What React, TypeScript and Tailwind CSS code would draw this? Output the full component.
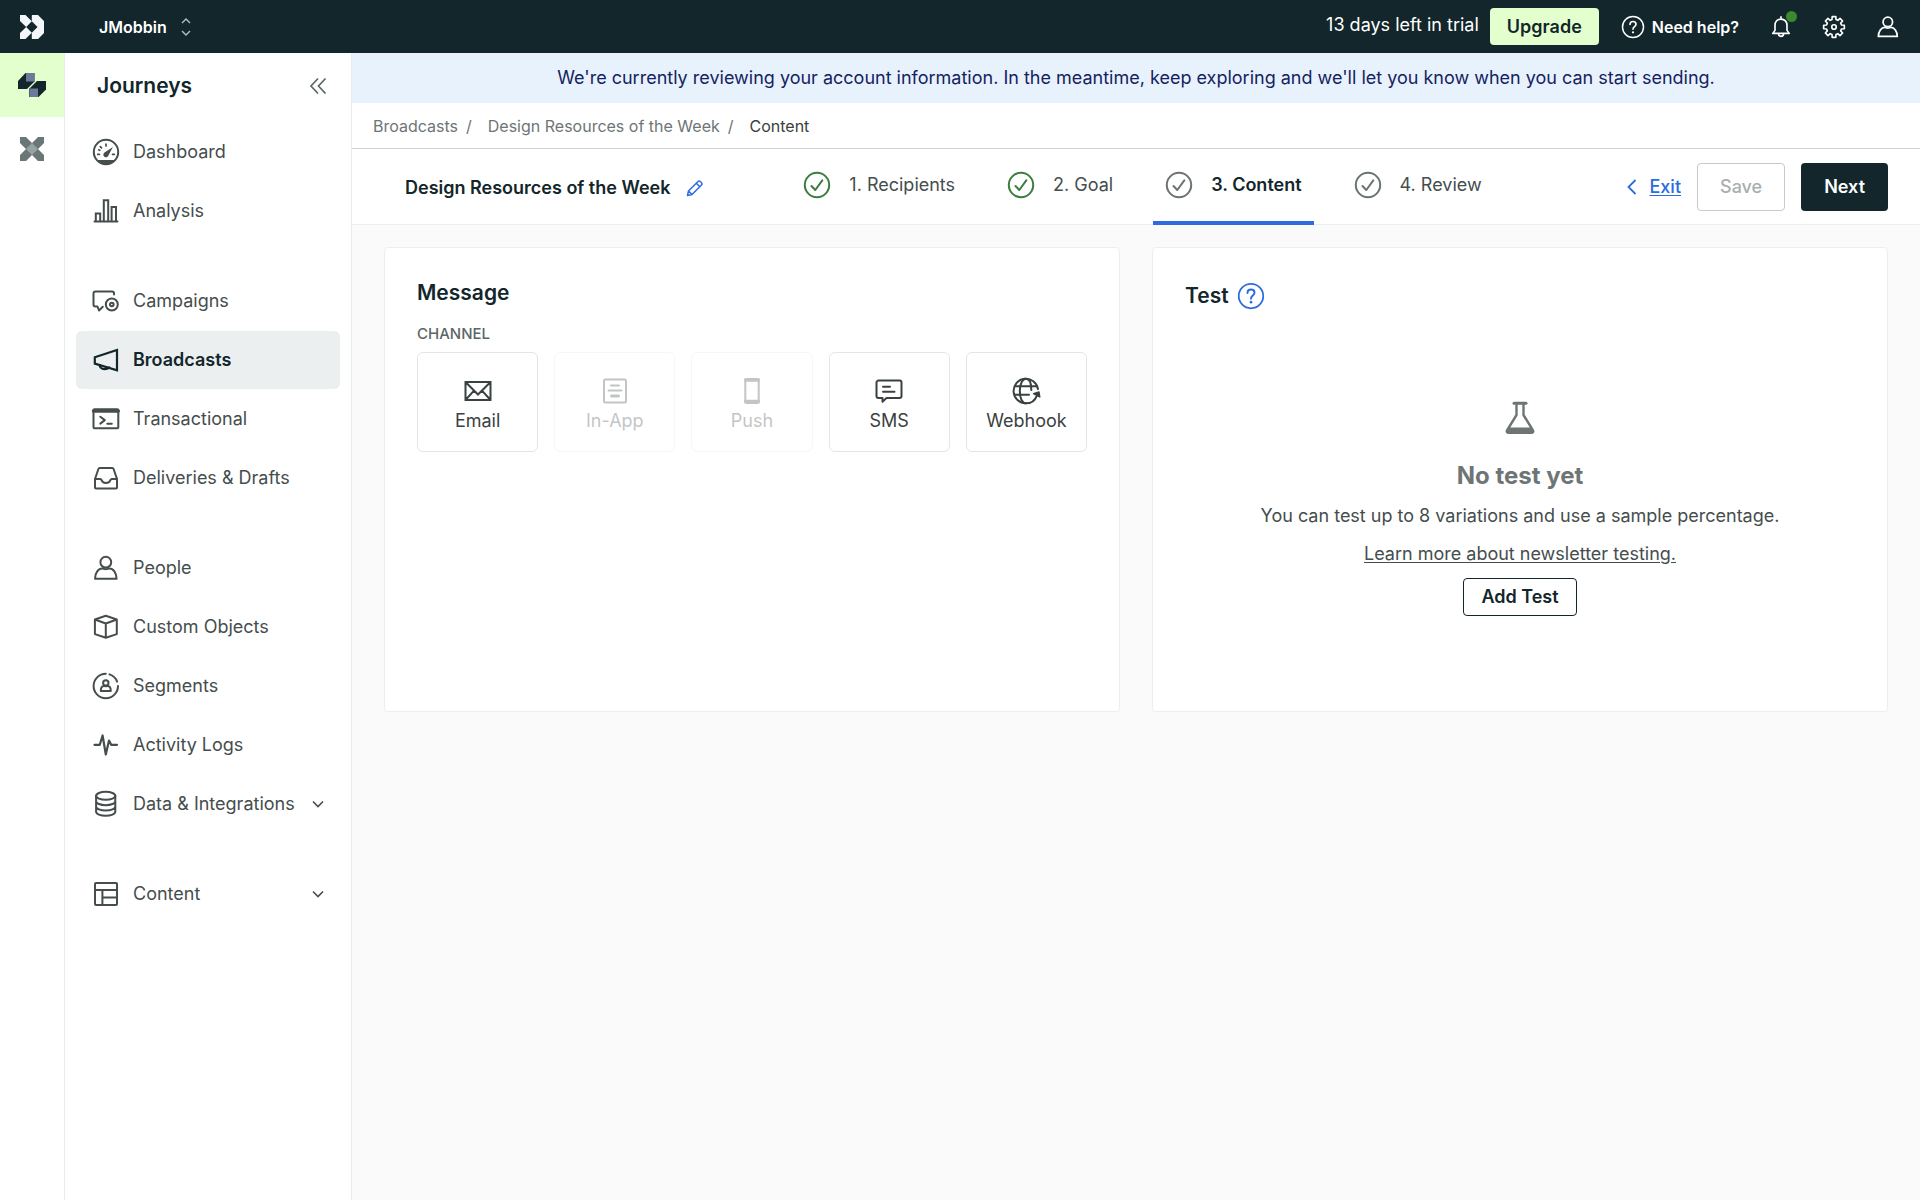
import React from 'react';

type IconProps = { className?: string };

const Icon: React.FC<{ className?: string; children: React.ReactNode }> = ({ className = 'size-8', children }) => (
  <svg
    viewBox="0 0 32 32"
    className={`${className} shrink-0`}
    fill="none"
    stroke="currentColor"
    strokeWidth="2"
    strokeLinejoin="round"
    strokeLinecap="round"
    aria-hidden="true"
  >
    {children}
  </svg>
);

const DashboardIcon = () => (
  <Icon>
    <circle cx="16" cy="16" r="12.2" />
    <path d="M7 24h18c-2 2.600-5.300 4.200-9 4.200s-7-1.600-9-4.200z" fill="currentColor" stroke="none" />
    <path d="M22.900 11l-4.500 8.500a2.600 2.600 0 1 1-3.900-3z" fill="currentColor" stroke="none" />
    <path d="M16 8.200v1.800M10.300 10.600l1.200 1.200M7.700 18.300h1.800M22.500 18.300h1.800M8.700 13.800l1 .5" strokeWidth="1.700" />
  </Icon>
);

const AnalysisIcon = () => (
  <Icon>
    <path d="M4.500 26.500h23M5.800 26v-7.500h4.400V26M13.800 26V5.200h4.400V26M21.600 26V12h4.400v14" strokeLinejoin="miter" />
  </Icon>
);

const CampaignsIcon = () => (
  <Icon>
    <path d="M24 9.500V8.500a2 2 0 0 0-2-2H5.500a2 2 0 0 0-2 2V19.500a2 2 0 0 0 2 2H7.500L9 25.500L12.800 21.800" />
    <circle cx="21.800" cy="19.500" r="6" />
    <circle cx="21.800" cy="19.500" r="1.800" />
  </Icon>
);

const BroadcastsIcon = () => (
  <Icon>
    <path d="M4.800 13.200L27 6v20.300L4.800 19.600z" strokeLinejoin="miter" strokeWidth="2.200" />
    <path d="M9.500 21.200c.8 2.600 3 4 5.300 4 1.800 0 3.400-.6 4.400-1.800" strokeWidth="2.200" />
  </Icon>
);

const TransactionalIcon = () => (
  <Icon>
    <rect x="3.500" y="6.300" width="24.800" height="19" rx="1" />
    <path d="M3.500 8h24.800" strokeWidth="3.500" />
    <path d="M10.300 13.700l4.500 3.400-4.500 3.500M17.300 20.700h4.500" />
  </Icon>
);

const DeliveriesIcon = () => (
  <Icon>
    <path d="M5 17v8.500a1 1 0 0 0 1 1h20a1 1 0 0 0 1-1V17L23.600 7a1.500 1.500 0 0 0-1.400-1H9.800a1.500 1.500 0 0 0-1.400 1z" />
    <path d="M5 17h5.200c.8 0 1.100.5 1.500 1.300.7 1.700 2 2.700 4.300 2.700s3.600-1 4.300-2.700c.4-.8.700-1.300 1.500-1.300H27" />
  </Icon>
);

const PersonIcon = ({ className }: IconProps) => (
  <Icon className={className}>
    <circle cx="15.800" cy="10.200" r="5.400" />
    <path d="M5 26.800c0-6 3.500-10.300 7.200-10.300 1.300 0 2.200.7 3.600.7s2.300-.7 3.600-.7c3.700 0 7.200 4.300 7.200 10.300z" />
  </Icon>
);

const ObjectsIcon = () => (
  <Icon>
    <path d="M15.800 4.800L26.800 8.500v14.600L15.800 26.800 4.900 23.100V8.500zM4.900 8.500l10.900 4 11-4M15.800 12.500v14.300" />
  </Icon>
);

const SegmentsIcon = () => (
  <Icon>
    <path d="M15.800 3.800a12.200 12.200 0 1 0 12.200 12.200M19.500 4.400a12.200 12.200 0 0 1 7.600 7.200" />
    <circle cx="15.800" cy="12.900" r="2.700" />
    <path d="M10.800 21c0-3 1.400-5 3.200-5 .7 0 1.100.3 1.800.3s1.100-.3 1.800-.3c1.800 0 3.200 2 3.200 5z" />
  </Icon>
);

const ActivityIcon = () => (
  <Icon>
    <path d="M4.500 15.800h5.300L12.600 6.500l3.200 19L19 11.500l2.200 4.300H27" strokeWidth="2.200" />
  </Icon>
);

const DataIcon = () => (
  <Icon>
    <ellipse cx="15.700" cy="7.800" rx="9.600" ry="4" />
    <path d="M6.100 7.800v16c0 2.200 4.300 4 9.600 4s9.600-1.800 9.600-4v-16M6.100 13.200c0 2.200 4.300 4 9.600 4s9.600-1.800 9.600-4M6.100 18.600c0 2.200 4.300 4 9.600 4s9.600-1.800 9.600-4" />
  </Icon>
);

const ContentIcon = () => (
  <Icon>
    <rect x="5" y="5" width="22" height="22" rx="1" />
    <path d="M5 12h22M12.400 12v15M12.400 19.500H27" />
  </Icon>
);

const ChevronDown = () => (
  <svg viewBox="0 0 12 8" className="w-3 h-2 shrink-0" fill="none" stroke="currentColor" strokeWidth="1.600" aria-hidden="true">
    <path d="M1 1.500l5 5 5-5" />
  </svg>
);

const HelpIcon = ({ className }: IconProps) => (
  <Icon className={className}>
    <circle cx="16" cy="16" r="14" />
    <path d="M12 12.600c0-2.500 1.700-4 4-4s4 1.500 4 3.700c0 3.200-4 3.300-4 6.700" strokeWidth="2.200" />
    <circle cx="16" cy="23" r="1.500" fill="currentColor" stroke="none" />
  </Icon>
);

const CheckCircle = ({ className }: IconProps) => (
  <svg viewBox="0 0 28 28" className={`size-7 shrink-0 ${className}`} fill="none" stroke="currentColor" strokeWidth="2" aria-hidden="true">
    <circle cx="14" cy="14" r="12.200" />
    <path d="M8.500 15l3.800 4 7-9.700" strokeLinecap="round" strokeLinejoin="round" />
  </svg>
);

const EmailIcon = () => (
  <Icon>
    <path d="M3.500 7h25v18h-25zM3.500 7L16 19.500 28.500 7M3.500 25l8.500-9.300M28.500 25L20 15.700" strokeLinejoin="miter" />
  </Icon>
);

const InAppIcon = () => (
  <Icon>
    <rect x="5" y="4.500" width="22" height="23" rx="1.500" />
    <path d="M12 10.500h8M9.500 15.500h13" />
    <path d="M12.500 21h7" strokeWidth="3" />
  </Icon>
);

const PushIcon = () => (
  <Icon>
    <rect x="9.300" y="4" width="13.400" height="24" rx="1.500" />
    <path d="M9.500 5h13M9.500 26.500h13" strokeWidth="3.500" />
  </Icon>
);

const SmsIcon = () => (
  <Icon>
    <path d="M5.500 5.500h21a2 2 0 0 1 2 2v13.500a2 2 0 0 1-2 2H13.500l-4 3.700V23h-4a2 2 0 0 1-2-2V7.500a2 2 0 0 1 2-2z" />
    <path d="M10 11.700h7M10 16.700h11.500" />
  </Icon>
);

const WebhookIcon = () => (
  <Icon>
    <path d="M28 14A12.300 12.300 0 1 0 16 28.300c5 0 9-2.800 10.800-7.500" />
    <path d="M21.300 15c0-7-2-11.200-5.300-11.200S9.800 8.500 9.800 16s2.500 12.300 6.200 12.300M5 11.200h22M5 19.700h14" />
    <path d="M23.500 18.700l5.500-1.700.8 5z" fill="currentColor" strokeWidth="1.400" />
  </Icon>
);

const FlaskIcon = () => (
  <svg viewBox="0 0 32 36" className="w-8 h-9" fill="none" stroke="currentColor" strokeWidth="2.400" strokeLinejoin="round" aria-hidden="true">
    <path d="M12.500 3v12L3 30.500c-.6 1.200 0 2.200 1 2.200h24c1 0 1.600-1 1-2.200L19.500 15V3" />
    <path d="M10 3.200h12" strokeWidth="3" strokeLinecap="round" />
    <path d="M4.800 27.500h22.400l1.800 5H3z" fill="currentColor" stroke="none" />
  </svg>
);

const navGroups = [
  [
    { label: 'Dashboard', icon: DashboardIcon },
    { label: 'Analysis', icon: AnalysisIcon }
  ],
  [
    { label: 'Campaigns', icon: CampaignsIcon },
    { label: 'Broadcasts', icon: BroadcastsIcon, active: true },
    { label: 'Transactional', icon: TransactionalIcon },
    { label: 'Deliveries & Drafts', icon: DeliveriesIcon }
  ],
  [
    { label: 'People', icon: PersonIcon },
    { label: 'Custom Objects', icon: ObjectsIcon },
    { label: 'Segments', icon: SegmentsIcon },
    { label: 'Activity Logs', icon: ActivityIcon },
    { label: 'Data & Integrations', icon: DataIcon, expandable: true }
  ],
  [{ label: 'Content', icon: ContentIcon, expandable: true }]
] as { label: string; icon: React.FC; active?: boolean; expandable?: boolean }[][];

const steps = [
  { label: '1. Recipients', done: true },
  { label: '2. Goal', done: true },
  { label: '3. Content', done: false, current: true },
  { label: '4. Review', done: false }
];

const channels = [
  { label: 'Email', icon: EmailIcon },
  { label: 'In-App', icon: InAppIcon, disabled: true },
  { label: 'Push', icon: PushIcon, disabled: true },
  { label: 'SMS', icon: SmsIcon },
  { label: 'Webhook', icon: WebhookIcon }
];

const TopBar = () => (
  <header className="flex items-center h-[53px] bg-[#12262b] text-white shrink-0">
    <a href="#" aria-label="Home" className="flex justify-center w-16">
      <svg viewBox="0 0 24 24" className="size-6" fill="#f3f6fb" aria-hidden="true">
        <path d="M0 0h5.500l6.300 6.300-5.600 5.700L0 5.900zM12.200 0H18l6 6v12l-6 6h-5.800l-.4-.4v-5.900L17.500 12l-5.700-5.700V.4zM0 18.100L6.200 12l5.600 5.700L5.500 24H0z" />
      </svg>
    </a>
    <button className="flex items-center gap-[14px] ml-[35px] text-base font-semibold">
      JMobbin
      <svg viewBox="0 0 10 18" className="w-[10px] h-[18px] opacity-70" fill="none" stroke="currentColor" strokeWidth="1.400" aria-hidden="true">
        <path d="M1 5l4-4 4 4M1 13l4 4 4-4" />
      </svg>
    </button>
    <div className="flex items-center ml-auto">
      <span className="text-lg leading-6 pb-1">13 days left in trial</span>
      <button className="ml-[11px] h-[37px] px-[17px] rounded bg-[#e4ffce] text-[#12262b] text-lg font-semibold">Upgrade</button>
      <button className="flex items-center gap-[7px] ml-[22px] text-base font-semibold">
        <HelpIcon className="size-6" />
        Need help?
      </button>
      <button aria-label="Notifications" className="relative ml-[30px]">
        <Icon className="size-6">
          <path d="M5 24.500h22l-3-4V14c0-5-3-8.500-8-8.500S8 9 8 14v6.500zM16 5.500V2.500M12.500 25c0 2 1.500 3.500 3.500 3.500s3.500-1.500 3.500-3.500" strokeWidth="2.200" />
        </Icon>
        <span className="absolute -top-1 -right-1 size-[11px] rounded-full bg-[#3c8a2e]" />
      </button>
      <button aria-label="Settings" className="ml-[29px]">
        <Icon className="size-6">
          <path
            d="M13.300 6.050L13.600 2.200 18.400 2.200 18.700 6.050 21.150 7.100 24 4.500 27.500 8 24.900 10.850 25.950 13.300 29.800 13.600 29.800 18.400 25.950 18.700 24.900 21.150 27.500 24 24 27.500 21.150 24.900 18.700 25.950 18.400 29.800 13.600 29.800 13.300 25.950 10.850 24.900 8 27.500 4.500 24 7.100 21.150 6.050 18.700 2.200 18.400 2.200 13.600 6.050 13.300 7.100 10.850 4.500 8 8 4.500 10.850 7.100z"
            strokeWidth="2.200"
          />
          <circle cx="16" cy="16" r="3" strokeWidth="2.200" />
        </Icon>
      </button>
      <button aria-label="Account" className="ml-7 mr-[18px]">
        <PersonIcon className="size-7" />
      </button>
    </div>
  </header>
);

const Rail = () => (
  <div className="w-[65px] border-r border-[#e9ecec] shrink-0">
    <a href="#" aria-label="Journeys" className="flex items-center justify-center w-16 h-16 bg-[#e4ffce]">
      <svg viewBox="0 0 28 24" className="w-7 h-6" aria-hidden="true">
        <path d="M7.500 0h9v8.500L9 16H0V8z" fill="#12262b" />
        <path d="M19 8h9v8.500L20.500 24H11v-8z" fill="#12262b" />
        <path d="M8 0h8.500v8.500H8zM11.300 15.500H20V24h-8.700z" fill="#6b7a99" />
      </svg>
    </a>
    <a href="#" aria-label="Data Pipelines" className="flex items-center justify-center w-16 h-16">
      <svg viewBox="0 0 24 24" className="size-6" aria-hidden="true">
        <path d="M0 0h6l6 6 6-6h6v6l-6 6 6 6v6h-6l-6-6-6 6H0v-6l6-6-6-6z" fill="#6b7676" />
        <path d="M12 6l6 6-6 6-6-6z" fill="#97a2a3" />
      </svg>
    </a>
  </div>
);

const Sidebar = () => (
  <aside className="w-[287px] border-r border-[#e9ecec] shrink-0">
    <div className="flex items-center justify-between h-[66px] pl-8 pr-6">
      <h2 className="text-[21px] font-semibold text-[#12262b]">Journeys</h2>
      <button aria-label="Collapse menu" className="text-[#5d6666]">
        <svg viewBox="0 0 18 18" className="size-[18px]" fill="none" stroke="currentColor" strokeWidth="1.700" aria-hidden="true">
          <path d="M9 1.500L2 9l7 7.500M16.500 1.500L9.500 9l7 7.500" />
        </svg>
      </button>
    </div>
    <nav className="flex flex-col gap-8 px-[11px] mt-1">
      {navGroups.map((group, index) => (
        <div key={index} className="flex flex-col gap-px">
          {group.map((item) => (
            <a
              key={item.label}
              href="#"
              className={`flex items-center h-[58px] pl-[14px] pr-4 gap-[11px] rounded-md text-lg whitespace-nowrap ${
                item.active ? 'bg-[#eceff0] font-semibold text-[#12262b]' : 'text-[#454d4d]'
              }`}
            >
              <item.icon />
              <span className="flex-1">{item.label}</span>
              {item.expandable && <ChevronDown />}
            </a>
          ))}
        </div>
      ))}
    </nav>
  </aside>
);

const Toolbar = () => (
  <div className="flex items-stretch h-[76px] pl-[53px] pr-8 bg-white border-b border-[#eceff0]">
    <div className="flex flex-1 items-center gap-4 pt-0.5">
      <h1 className="text-lg font-semibold text-[#12262b]">Design Resources of the Week</h1>
      <button aria-label="Rename" className="text-[#2c6be0]">
        <svg viewBox="0 0 18 18" className="size-[18px]" fill="none" stroke="currentColor" strokeWidth="1.500" strokeLinejoin="round" aria-hidden="true">
          <path d="M1.500 16.500l1-4.500L12 2.500a1.500 1.500 0 0 1 2.200 0l1.300 1.300a1.500 1.500 0 0 1 0 2.200L6 15.500zM10.300 4.200l3.500 3.500M2.500 12L6 15.500" />
        </svg>
      </button>
    </div>
    <nav className="flex gap-7 mr-2">
      {steps.map((step) => (
        <a
          key={step.label}
          href="#"
          className={`flex items-center gap-[18px] px-3 -mb-px border-b-4 text-lg ${
            step.current ? 'border-[#2c6be0] font-semibold text-[#12262b]' : 'border-transparent text-[#454d4d]'
          }`}
        >
          <CheckCircle className={step.done ? 'text-[#3c7d3f]' : 'text-[#6b7272]'} />
          <span>{step.label}</span>
        </a>
      ))}
    </nav>
    <div className="flex flex-1 items-center justify-end">
      <a href="#" className="flex items-center gap-3 mr-4 text-lg font-medium text-[#2c6be0]">
        <svg viewBox="0 0 10 16" className="w-[10px] h-4" fill="none" stroke="currentColor" strokeWidth="1.800" aria-hidden="true">
          <path d="M8.500 1l-7 7 7 7" />
        </svg>
        <span className="underline underline-offset-2">Exit</span>
      </a>
      <button disabled className="h-12 px-[22px] rounded border border-[#c5caca] text-lg font-medium text-[#a9afaf]">Save</button>
      <button className="h-12 px-[23px] ml-4 rounded bg-[#12262b] text-lg font-semibold text-white">Next</button>
    </div>
  </div>
);

const MessageCard = () => (
  <section className="min-h-[465px] px-8 pt-[31px] bg-white border border-[#eceff0] rounded">
    <h2 className="text-[21px] leading-7 font-semibold text-[#12262b]">Message</h2>
    <h3 className="mt-[17px] text-[15px] leading-5 font-medium text-[#5d6666]">CHANNEL</h3>
    <div className="grid grid-cols-5 gap-4 mt-2">
      {channels.map((channel) => (
        <button
          key={channel.label}
          disabled={channel.disabled}
          className={`flex flex-col items-center justify-center h-[100px] pt-1.5 border border-[#e3e6e6] rounded-md text-lg leading-7 text-[#3a4141] ${
            channel.disabled ? 'opacity-30' : ''
          }`}
        >
          <channel.icon />
          {channel.label}
        </button>
      ))}
    </div>
  </section>
);

const TestCard = () => (
  <section className="flex flex-col min-h-[465px] px-8 pt-8 bg-white border border-[#eceff0] rounded">
    <div className="flex items-center gap-2">
      <h2 className="text-[21px] leading-8 font-semibold text-[#12262b]">Test</h2>
      <button aria-label="About tests" className="text-[#2c6be0]">
        <HelpIcon className="size-7" />
      </button>
    </div>
    <div className="flex flex-col items-center mt-[88px] text-[#454d4d] text-lg">
      <div className="text-[#6e7575]">
        <FlaskIcon />
      </div>
      <h3 className="mt-6 text-[24px] leading-8 font-bold text-[#6e7575]">No test yet</h3>
      <p className="mt-[10px] leading-7">You can test up to 8 variations and use a sample percentage.</p>
      <a href="#" className="mt-[10px] leading-7 underline underline-offset-2">Learn more about newsletter testing.</a>
      <button className="mt-[10px] h-[38px] px-[17px] border border-[#12262b] rounded font-semibold text-[#12262b]">Add Test</button>
    </div>
  </section>
);

const App: React.FC = () => {
  return (
    <div className="flex flex-col min-h-screen font-['Inter',sans-serif] bg-white">
      <TopBar />
      <div className="flex flex-1">
        <Rail />
        <Sidebar />
        <main className="flex-1 bg-[#fafafa]">
          <p className="flex items-center justify-center h-[50px] bg-[#e8f2fd] text-lg text-[#14235f]">
            We're currently reviewing your account information. In the meantime, keep exploring and we'll let you know when you can start sending.
          </p>
          <nav className="flex items-center h-[46px] px-[21px] bg-white border-b border-[#cdd2d2] text-base text-[#6e7575]">
            <a href="#">Broadcasts</a>
            <span className="ml-2 mr-4">/</span>
            <a href="#">Design Resources of the Week</a>
            <span className="ml-2 mr-4">/</span>
            <span className="text-[#3a4141]">Content</span>
          </nav>
          <Toolbar />
          <div className="grid grid-cols-2 gap-8 px-8 pt-[22px]">
            <MessageCard />
            <TestCard />
          </div>
        </main>
      </div>
    </div>
  );
};

export default App;
